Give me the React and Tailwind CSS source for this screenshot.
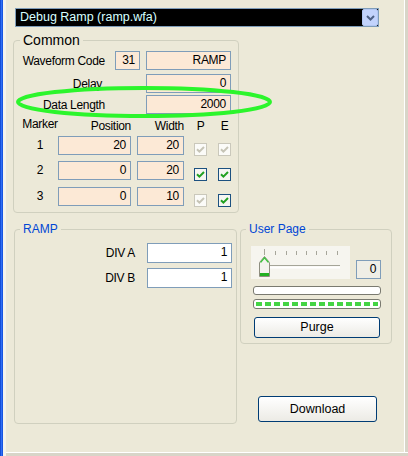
import React from "react";

const FIELD = "h-[19px] border border-[#7f9db9] text-right pr-[4px] leading-[17px]";

function Check({ on }) {
  return (
    <div
      className={
        on
          ? "w-[13px] h-[13px] border border-[#1c5180] bg-[#f6f6f2] flex items-center justify-center"
          : "w-[13px] h-[13px] border border-[#cac8bb] bg-[#fbfbf8] flex items-center justify-center"
      }
    >
      <svg width="9" height="9" viewBox="0 0 9 9">
        <path
          d="M1 4.2 L3.4 6.6 L8 2"
          stroke={on ? "#21a121" : "#c6c4b6"}
          strokeWidth="2"
          fill="none"
        />
      </svg>
    </div>
  );
}

function MarkerRow({ n, pos, width, p, e, top }) {
  return (
    <div className={`flex items-start h-[19px] ${top}`}>
      <div className="w-[44px] pl-[8px] text-center leading-[19px]">{n}</div>
      <div className={`${FIELD} w-[73px] bg-[#fce9d6]`}>{pos}</div>
      <div className={`${FIELD} w-[47px] ml-[6px] bg-[#fce9d6]`}>{width}</div>
      <div className="ml-[10px] mt-[7px]">
        <Check on={p} />
      </div>
      <div className="ml-[11px] mt-[7px]">
        <Check on={e} />
      </div>
    </div>
  );
}

function Slider() {
  const ticks = [13, 24, 35, 45, 55, 65, 75, 86];
  return (
    <svg width="99" height="33" viewBox="0 0 99 33" className="block">
      <rect x="0" y="0" width="99" height="33" fill="#f6f5ef" />
      {ticks.map((x, i) => (
        <line key={x} x1={x + 0.5} x2={x + 0.5} y1={i === 0 ? 3 : 5} y2="9" stroke="#a7a69a" strokeWidth="1" />
      ))}
      <line x1="18" x2="89" y1="19.5" y2="19.5" stroke="#a5a598" strokeWidth="1" />
      <line x1="18" x2="89" y1="21.5" y2="21.5" stroke="#ffffff" strokeWidth="2" />
      <path d="M8.5 16.5 L13.5 10.5 L18.5 16.5 L18.5 30.5 L8.5 30.5 Z" fill="#f3f3ee" stroke="#8e8e80" strokeWidth="1" />
      <path d="M9.5 16.5 L13.5 11.8 L17.5 16.5" fill="none" stroke="#3cc43c" strokeWidth="1.2" />
      <rect x="9" y="27" width="9" height="3" fill="#22b022" />
    </svg>
  );
}

export default function App() {
  return (
    <div className="relative w-[408px] h-[456px] flex overflow-hidden bg-[#ece9d8] text-black text-[12px] tracking-[-0.3px] font-['Liberation_Sans',Arial,sans-serif]">
      {/* window edge */}
      <div className="w-[3px] bg-gradient-to-r from-[#0a3cc8] via-[#2f6ff5] to-[#0b47d6]" />
      <div className="w-[3px] bg-[#f4f3ec]" />

      <div className="flex-1 flex flex-col">
        <div className="flex-1 flex">
          <div className="flex-1 flex flex-col">
            {/* combo */}
            <div className="mt-[8px] ml-[9px] w-[364px] h-[19px] border border-[#7f9db9] bg-black flex items-center">
              <div className="flex-1 pl-[4px] text-[#d8ffff] text-[12.5px] tracking-normal leading-[17px]">Debug Ramp (ramp.wfa)</div>
              <div className="w-[16px] h-[17px] bg-[#c2d3fc] border border-[#b2c7f3] rounded-[2px] flex items-center justify-center">
                <svg width="9" height="6" viewBox="0 0 9 6">
                  <path d="M1 1 L4.5 4.5 L8 1" stroke="#4d6185" strokeWidth="2" fill="none" />
                </svg>
              </div>
            </div>

            {/* Common */}
            <fieldset className="mt-[5px] ml-[7px] w-[226px] border border-[#d0d0bf] rounded-[4px] pt-[3px] pb-[6px]">
              <legend className="ml-[6px] px-[3px] text-[14px] leading-[16px] tracking-normal">Common</legend>
              <div className="flex items-center h-[19px]">
                <div className="w-[91px] text-right">Waveform Code</div>
                <div className={`${FIELD} w-[25px] ml-[10px] bg-[#fce9d6]`}>31</div>
                <div className={`${FIELD} w-[85px] ml-[6px] bg-[#fce9d6]`}>RAMP</div>
              </div>
              <div className="flex items-center h-[19px] mt-[4px]">
                <div className="w-[88px] text-right">Delay</div>
                <div className={`${FIELD} w-[85px] ml-[44px] bg-[#fce9d6]`}>0</div>
              </div>
              <div className="flex items-center h-[19px] mt-[2px]">
                <div className="w-[91px] text-right">Data Length</div>
                <div className={`${FIELD} w-[85px] ml-[41px] bg-[#fce9d6]`}>2000</div>
              </div>
              <div className="flex items-end h-[14px] mt-[7px]">
                <div className="w-[44px] pl-[8px] text-center pb-[2px]">Marker</div>
                <div className="w-[73px] text-right">Position</div>
                <div className="w-[47px] ml-[6px] text-right">Width</div>
                <div className="w-[13px] ml-[10px] text-center">P</div>
                <div className="w-[13px] ml-[11px] text-center">E</div>
              </div>
              <MarkerRow n="1" pos="20" width="20" p={false} e={false} top="mt-[1px]" />
              <MarkerRow n="2" pos="0" width="20" p={true} e={true} top="mt-[6px]" />
              <MarkerRow n="3" pos="0" width="10" p={false} e={true} top="mt-[7px]" />
            </fieldset>

            <div className="flex mt-[9px]">
              {/* RAMP */}
              <fieldset className="ml-[8px] w-[223px] h-[202px] border border-[#d0d0bf] rounded-[4px] pt-[7px]">
                <legend className="ml-[5px] px-[3px] text-[12px] leading-[14px] text-[#0046d5] tracking-normal">RAMP</legend>
                <div className="flex items-center h-[20px]">
                  <div className="w-[120px] text-right">DIV A</div>
                  <div className={`${FIELD} h-[20px] w-[85px] ml-[12px] bg-white`}>1</div>
                </div>
                <div className="flex items-center h-[20px] mt-[5px]">
                  <div className="w-[120px] text-right">DIV B</div>
                  <div className={`${FIELD} h-[20px] w-[85px] ml-[12px] bg-white`}>1</div>
                </div>
              </fieldset>

              <div className="flex flex-col">
                {/* User Page */}
                <fieldset className="ml-[3px] w-[152px] border border-[#d0d0bf] rounded-[4px] pt-[10px] pb-[5px]">
                  <legend className="ml-[5px] px-[3px] text-[12px] leading-[14px] text-[#0046d5] tracking-normal">User Page</legend>
                  <div className="flex items-end">
                    <div className="ml-[10px]">
                      <Slider />
                    </div>
                    <div className={`${FIELD} w-[25px] ml-[6px] bg-[#efeee6]`}>0</div>
                  </div>
                  <div className="mt-[7px] ml-[12px] w-[128px] h-[9px] border border-[#7a7a70] rounded-[3px] bg-white" />
                  <div className="mt-[4px] ml-[12px] w-[128px] h-[10px] border border-[#7a7a70] rounded-[3px] bg-white px-[2px] flex items-center">
                    <div className="w-full h-[4px] bg-[repeating-linear-gradient(90deg,#44d444_0px,#44d444_6px,transparent_6px,transparent_9px)]" />
                  </div>
                  <button className="mt-[8px] ml-[13px] w-[126px] h-[21px] border border-[#003c74] rounded-[3px] bg-gradient-to-b from-white to-[#ecebe5] text-[12.5px] tracking-normal flex items-center justify-center">
                    Purge
                  </button>
                </fieldset>

                <button className="mt-[52px] ml-[21px] w-[119px] h-[26px] border border-[#003c74] rounded-[3px] bg-gradient-to-b from-white to-[#ecebe5] text-[12.5px] tracking-normal flex items-center justify-center">
                  Download
                </button>
              </div>
            </div>
          </div>
          {/* right edge */}
          <div className="w-[4px] border-l border-white bg-[#d8d5c8]" />
        </div>
        {/* bottom edge */}
        <div className="h-[4px] border-t border-white bg-[#d8d5c8]" />
      </div>

      {/* highlight ellipse drawn over the form */}
      <svg className="absolute left-0 top-0 pointer-events-none" width="408" height="456">
        <ellipse cx="144" cy="102" rx="126" ry="14" fill="none" stroke="#2cf52c" strokeWidth="4" />
      </svg>
    </div>
  );
}
